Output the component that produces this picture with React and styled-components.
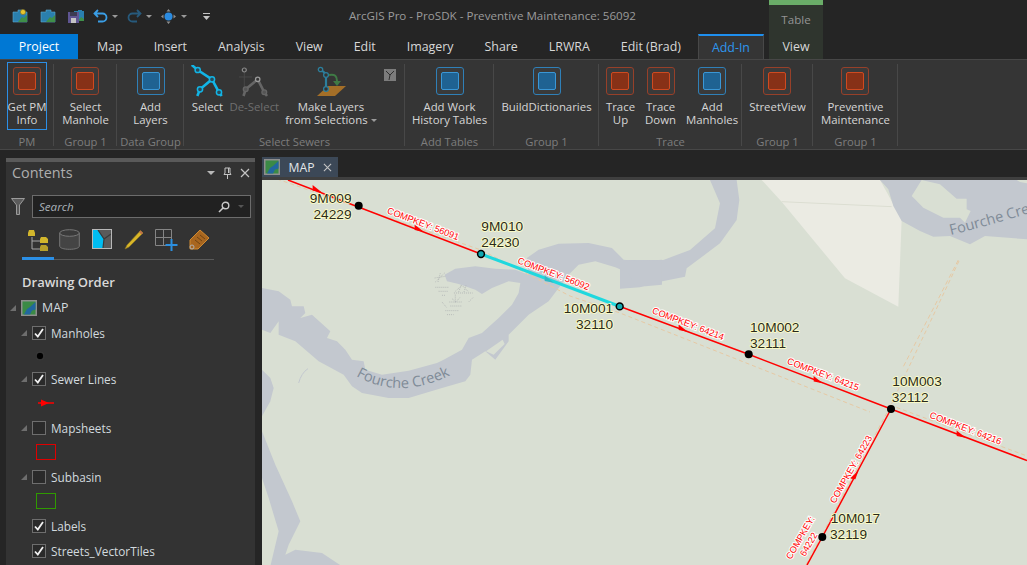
import React from 'react';
import styled, { createGlobalStyle } from 'styled-components';

const Global = createGlobalStyle`
  html, body { margin: 0; padding: 0; height: 100%; overflow: hidden; background: #252525; }
  #root { height: 100%; }
`;

const Page = styled.div`
  display: flex;
  flex-direction: column;
  height: 565px;
  background: #252525;
  font-family: "Open Sans", "Noto Sans", sans-serif;
  font-size: 12px;
  color: #d6d6d6;
`;

/* ---------- title bar + tabs ---------- */
const Header = styled.header`
  display: flex;
  height: 59px;
  flex: none;
`;
const HeaderMain = styled.div`
  width: 769px;
  display: flex;
  flex-direction: column;
`;
const TitleRow = styled.div`
  height: 34px;
  display: flex;
  align-items: center;
`;
const QuickAccess = styled.div`
  width: 349px;
  height: 14px;
  margin-top: -2px;
  padding-left: 12px;
  box-sizing: border-box;
  display: flex;
  align-items: center;
`;
const QuickSlot = styled.span`
  display: flex;
  align-items: center;
  margin-right: ${(p) => p.gap}px;
`;
const Caret = styled.span`
  display: inline-block;
  width: 0;
  height: 0;
  vertical-align: middle;
  border-left: ${(p) => p.size || 3}px solid transparent;
  border-right: ${(p) => p.size || 3}px solid transparent;
  border-top: ${(p) => p.size || 3}px solid ${(p) => p.color || '#9a9a9a'};
  margin-left: ${(p) => p.left || 0}px;
`;
const AppTitle = styled.div`
  color: #9b9b9b;
  font-size: 11.6px;
  margin-top: -3px;
  white-space: nowrap;
`;
const TabRow = styled.nav`
  height: 25px;
  display: flex;
`;
const Tab = styled.div`
  height: 25px;
  box-sizing: border-box;
  display: flex;
  align-items: center;
  white-space: nowrap;
  padding: 0 15.5px;
  font-size: 12.4px;
  color: #d8d8d8;
`;
const ProjectTab = styled(Tab)`
  width: 78px;
  justify-content: center;
  padding: 0;
  margin-right: 3.5px;
  background: #0078d4;
  color: #fff;
`;
const ActiveTab = styled(Tab)`
  width: 66px;
  justify-content: center;
  padding: 0;
  margin-left: 1.5px;
  background: #353535;
  border: 1px solid #484848;
  border-bottom: none;
  border-top: 2px solid #1e8fef;
  color: #2e95ee;
`;
const ContextColumn = styled.div`
  width: 54px;
  height: 59px;
  box-sizing: border-box;
  border-top: 5px solid #6aad68;
  background: #2f352e;
  display: flex;
  flex-direction: column;
  align-items: center;
`;
const ContextName = styled.div`
  height: 29px;
  display: flex;
  align-items: center;
  color: #949494;
  font-size: 11.6px;
`;
const ContextTab = styled.div`
  height: 25px;
  display: flex;
  align-items: center;
  color: #d8d8d8;
  font-size: 12.4px;
`;

/* ---------- ribbon ---------- */
const Ribbon = styled.section`
  height: 91px;
  flex: none;
  box-sizing: border-box;
  display: flex;
  background: #353535;
  border-top: 1px solid #474747;
  border-bottom: 1px solid #474747;
`;
const Group = styled.div`
  width: ${(p) => p.width}px;
  flex: none;
  box-sizing: border-box;
  display: flex;
  flex-direction: column;
  position: relative;
  padding-top: 2px;
  &::after {
    content: '';
    position: absolute;
    right: 0;
    top: 4px;
    bottom: 3px;
    width: 1px;
    background: #484848;
  }
`;
const GroupBody = styled.div`
  height: 68px;
  box-sizing: border-box;
  padding-left: ${(p) => p.inset || 0}px;
  padding-right: ${(p) => p.insetEnd || 0}px;
  display: flex;
  justify-content: center;
`;
const GroupName = styled.div`
  margin-top: 5px;
  text-align: center;
  color: #7d7d7d;
  font-size: 11.2px;
  line-height: 13px;
`;
const BigButton = styled.div`
  box-sizing: border-box;
  flex: none;
  height: 68px;
  padding: 2px ${(p) => (p.tight ? 0 : p.wide ? 4 : 2)}px 0;
  border: 1px solid ${(p) => (p.focused ? '#2c8fe6' : 'transparent')};
  display: flex;
  flex-direction: column;
  align-items: center;
  white-space: pre;
  text-align: center;
  line-height: 13px;
  font-size: 11.4px;
  color: ${(p) => (p.disabled ? '#6f6f6f' : '#d6d6d6')};
`;
const IconSlot = styled.div`
  height: 32px;
  margin-bottom: 3px;
  display: flex;
  align-items: center;
  justify-content: center;
`;
const AddinIcon = styled.div`
  width: 28px;
  height: 28px;
  box-sizing: border-box;
  border-radius: 3px;
  border: 1px solid ${(p) => (p.tone === 'blue' ? '#2f80b8' : '#974029')};
  background: #3a3a3a;
  display: flex;
  align-items: center;
  justify-content: center;
  &::before {
    content: '';
    width: 18px;
    height: 18px;
    box-sizing: border-box;
    border-radius: 2px;
    border: 1px solid ${(p) => (p.tone === 'blue' ? '#3a97d6' : '#cf4a20')};
    background: ${(p) => (p.tone === 'blue' ? '#1f6292' : '#873117')};
  }
`;
const SmallCommand = styled.div`
  align-self: flex-start;
  margin: 7px 0 0 4px;
  display: flex;
`;

/* ---------- workspace ---------- */
const Workspace = styled.main`
  flex: 1;
  min-height: 0;
  display: flex;
  padding: 7px 0 0 6px;
`;
const ContentsPane = styled.aside`
  width: 249px;
  margin-top: 1px;
  flex: none;
  box-sizing: border-box;
  background: #333;
  border-top: 4px solid #5a5a5a;
  overflow: hidden;
`;
const PaneHeader = styled.div`
  height: 25px;
  padding: 0 5px 4px 6px;
  box-sizing: border-box;
  display: flex;
  align-items: center;
  color: #aeaeae;
  font-size: 14.4px;
`;
const PaneTitle = styled.span`
  flex: 1;
`;
const PaneControls = styled.span`
  display: flex;
  align-items: center;
  gap: 8px;
`;
const SearchRow = styled.div`
  height: 23px;
  margin-top: 8px;
  padding: 0 4px 0 5px;
  display: flex;
  align-items: center;
  gap: 7px;
`;
const SearchBox = styled.div`
  flex: 1;
  height: 23px;
  box-sizing: border-box;
  padding: 0 6px;
  background: #212121;
  border: 1px solid #6c6c6c;
  display: flex;
  align-items: center;
  color: #a9b2b8;
  font-style: italic;
  font-size: 11.6px;
`;
const SearchText = styled.span`
  flex: 1;
`;
const ViewIcons = styled.div`
  margin: 11px 0 0 16px;
  width: 192px;
  height: 31px;
  box-sizing: border-box;
  padding-left: 5px;
  border-bottom: 1px solid #5a5a5a;
  position: relative;
  display: flex;
  gap: 10px;
  &::after {
    content: '';
    position: absolute;
    left: 0;
    bottom: -1px;
    width: 32px;
    height: 3px;
    background: #2b8fe6;
  }
`;
const ViewIcon = styled.span`
  display: block;
  width: ${(p) => p.width}px;
  height: 23px;
  margin-right: ${(p) => p.after}px;
`;
const SectionTitle = styled.div`
  margin: 12px 0 0 16px;
  height: 20px;
  line-height: 20px;
  color: #d9d9d9;
  font-size: 13px;
  font-weight: 600;
`;
const Tree = styled.div`
  margin-top: 3px;
`;
const LayerRow = styled.div`
  height: 25px;
  display: flex;
  align-items: center;
  padding-left: ${(p) => p.indent}px;
  color: #d2dadf;
  font-size: 11.8px;
  white-space: nowrap;
`;
const MapRow = styled(LayerRow)`
  font-size: 12.4px;
`;
const MapName = styled.span`
  margin-left: 5px;
`;
const SymbolRow = styled.div`
  height: ${(p) => (p.compact ? 21 : 24)}px;
  display: flex;
  align-items: center;
  padding-left: 30px;
`;
const Expander = styled.span`
  width: 0;
  height: 0;
  margin-right: 5px;
  border-left: 6px solid transparent;
  border-bottom: 6px solid #6e6e6e;
`;
const CheckBox = styled.span`
  width: 14px;
  height: 14px;
  box-sizing: border-box;
  margin-right: 5px;
  background: #2a2a2a;
  border: 1px solid #6e6e6e;
  display: flex;
  align-items: center;
  justify-content: center;
  flex: none;
`;
const FillSwatch = styled.span`
  width: 20px;
  height: 16px;
  box-sizing: border-box;
  border: 1px solid ${(p) => p.color};
`;

const MapPane = styled.div`
  flex: 1;
  min-width: 0;
  margin-left: 7px;
  display: flex;
  flex-direction: column;
`;
const DocTabs = styled.div`
  height: 20px;
  flex: none;
  display: flex;
`;
const DocTab = styled.div`
  width: 76px;
  box-sizing: border-box;
  padding: 0 6px 0 2px;
  background: #3c4857;
  color: #e2e6ea;
  font-size: 12.2px;
  display: flex;
  align-items: center;
  justify-content: space-between;
`;
const MapFrame = styled.div`
  flex: 1;
  min-height: 0;
  border-top: 3px solid #3f3f3f;
`;
const MapSvg = styled.svg`
  display: block;
  width: 100%;
  height: 100%;
  background: #d9dfd3;
`;
const NodeLabel = styled.text`
  font-family: "Liberation Sans", Arial, sans-serif;
  font-size: 13.7px;
  fill: #2a2a1c;
  stroke: #ffffc4;
  stroke-width: 1.6px;
  paint-order: stroke;
`;
const KeyLabel = styled.text`
  font-family: "Liberation Sans", Arial, sans-serif;
  font-size: 9.2px;
  fill: #f00;
  stroke: #fff;
  stroke-width: 2px;
  paint-order: stroke;
`;
const WaterLabel = styled.text`
  font-family: "Open Sans", sans-serif;
  font-size: 14.6px;
  fill: #7f8b97;
`;

/* ---------- icons ---------- */
const FolderIcon = ({ star }) => (
  <svg width="16" height="14" viewBox="0 0 16 14">
    <path d="M1 3h5V1h5v2h4v10H1z" fill="#2a7fae" stroke="#5aa8d0" strokeWidth=".6" />
    <path d="M6 13l4-5 2 1 3-3v7z" fill="#3f8f4a" />
    {star && <circle cx="11" cy="3" r="2.6" fill="#e8c52e" stroke="#7a6a20" strokeWidth=".6" />}
  </svg>
);
const SaveIcon = () => (
  <svg width="16" height="14" viewBox="0 0 16 14">
    <path d="M6 2h4V1h4v1h2v10H6z" fill="#2a7fae" />
    <path d="M10 12l3-4 3 2v2z" fill="#3f8f4a" />
    <rect x="0" y="3" width="11" height="11" fill="#5f5592" />
    <rect x="2" y="3" width="7" height="4" fill="#3b3b52" />
    <rect x="3" y="9" width="5" height="5" fill="#c4c4c4" />
  </svg>
);
const UndoIcon = ({ color, flip }) => (
  <svg width="15" height="14" viewBox="0 0 15 14" style={flip ? { transform: 'scaleX(-1)' } : undefined}>
    <path d="M5 1L1.5 4.5 5 8M2 4.5h7.5a4 4 0 0 1 0 8H5" fill="none" stroke={color} strokeWidth="1.8" />
  </svg>
);
const NavIcon = () => (
  <svg width="15" height="15" viewBox="0 0 15 15">
    <circle cx="7.5" cy="7.5" r="4" fill="#2b8be0" />
    <path d="M7.5 0l2 2.5h-4zM7.5 15l2-2.5h-4zM0 7.5l2.500-2v4zM15 7.5l-2.500-2v4z" fill="#8d8d8d" />
  </svg>
);
const CustomizeIcon = () => (
  <svg width="7" height="7" viewBox="0 0 7 7">
    <path d="M0 .5h7" stroke="#c4c4c4" strokeWidth="1" />
    <path d="M0 3h7L3.500 7z" fill="#c4c4c4" />
  </svg>
);
const SelectIcon = () => {
  const c = '#12b5e6';
  return (
    <svg width="32" height="32" viewBox="0 0 32 32">
      <path d="M.7 0L6.700 5 21 14.300 9 24.300 6.300 31M21 14.300L28 27.300 30.700 31" fill="none" stroke={c} strokeWidth="2.600" />
      {[[6.7, 5], [21, 14.3], [9, 24.3], [28, 27.3]].map(([x, y]) => (
        <circle key={x} cx={x} cy={y} r="2.600" fill="#2a4a58" stroke={c} strokeWidth="1.500" />
      ))}
    </svg>
  );
};
const DeselectIcon = () => (
  <svg width="32" height="32" viewBox="0 0 32 32">
    <path d="M6.300 7v20M1 12h13" stroke="#4c4c4c" strokeWidth=".8" />
    <path d="M19.700 14.300L7.700 24.300 5.500 31M19.700 14.300L26.300 27.300 29 31" fill="none" stroke="#666" strokeWidth="2.600" />
    <circle cx="6.300" cy="5" r="2" fill="#333" stroke="#8c8c8c" strokeWidth="1.200" />
    <circle cx="19.700" cy="14.300" r="2.200" fill="#333" stroke="#9a9a9a" strokeWidth="1.300" />
    <circle cx="7.700" cy="24.300" r="2.400" fill="#555" stroke="#666" strokeWidth="1.300" />
    <circle cx="26.300" cy="27.300" r="2.400" fill="#555" stroke="#666" strokeWidth="1.300" />
  </svg>
);
const MakeLayersIcon = () => (
  <svg width="34" height="32" viewBox="0 0 34 32">
    <path d="M3 31l11-10h18L21 31z" fill="#a46f28" />
    <path d="M6 4l6 5 0 15" fill="none" stroke="#2c7f9d" strokeWidth="2.200" />
    <circle cx="6.500" cy="4.500" r="2.200" fill="#333" stroke="#2c7f9d" strokeWidth="1.300" />
    <circle cx="12" cy="10" r="2.400" fill="#333" stroke="#2c7f9d" strokeWidth="1.300" />
    <circle cx="12" cy="24" r="2.400" fill="#333" stroke="#2c7f9d" strokeWidth="1.300" />
    <path d="M15 10c6-1 8 1 8 6" fill="none" stroke="#3f7a45" strokeWidth="2" />
    <path d="M19 16h8l-4 5z" fill="#3f7a45" />
  </svg>
);
const FilterGlyph = () => (
  <svg width="12" height="12" viewBox="0 0 12 12">
    <rect width="12" height="12" fill="#7c7c7c" />
    <path d="M2 2l4 4 4-4M6 6l-1 5" fill="none" stroke="#2f2f2f" strokeWidth="1" />
  </svg>
);
const PinIcon = () => (
  <svg width="9" height="12" viewBox="0 0 9 12">
    <path d="M2 1h5v5l1 1.500H1L2 6zM4.500 8v4M5.500 1v5" fill="none" stroke="#c4c4c4" />
  </svg>
);
const CloseIcon = ({ size = 10, color = '#c4c4c4' }) => (
  <svg width={size} height={size} viewBox="0 0 10 10">
    <path d="M1 1l8 8M9 1l-8 8" stroke={color} strokeWidth="1.200" />
  </svg>
);
const FunnelIcon = () => (
  <svg width="14" height="17" viewBox="0 0 14 17">
    <path d="M.5.500h13L8.500 7v9.500h-3V7z" fill="#5b5b5b" stroke="#9b9b9b" />
  </svg>
);
const MagnifierIcon = () => (
  <svg width="12" height="12" viewBox="0 0 12 12">
    <circle cx="7.500" cy="4.500" r="3.300" fill="none" stroke="#c8c8c8" strokeWidth="1.400" />
    <path d="M5 7l-4 4" stroke="#c8c8c8" strokeWidth="1.600" />
  </svg>
);
const OrderIcon = () => (
  <svg width="22" height="23" viewBox="0 0 22 23">
    <path d="M5 8v12h8M5 12h8" fill="none" stroke="#a8a8a8" />
    <path d="M1 4l1-3h5l1 3v3H1z" fill="#d2b62c" />
    <path d="M13 10l1-2h5l2 2v4h-8z" fill="#d2b62c" />
    <path d="M13 18l1-2h5l2 2v4h-8z" fill="#b7a02a" />
  </svg>
);
const CylinderIcon = () => (
  <svg width="21" height="21" viewBox="0 0 21 21">
    <path d="M.7 4v13c0 2 4 3.300 9.800 3.300s9.800-1.300 9.800-3.300V4" fill="#444" stroke="#777" />
    <ellipse cx="10.500" cy="4" rx="9.800" ry="3.300" fill="#3a3a3a" stroke="#777" />
  </svg>
);
const SourceIcon = () => (
  <svg width="20" height="20" viewBox="0 0 20 20">
    <rect width="20" height="20" fill="#5a5a5a" />
    <path d="M1 1h5l6 9-1 9H1z" fill="#00bdf2" />
    <path d="M6 1l6 9-1 9M12 10l7-5" fill="none" stroke="#3a3a3a" strokeWidth="1.200" />
    <rect x=".5" y=".5" width="19" height="19" fill="none" stroke="#b8b8b8" />
  </svg>
);
const PencilIcon = () => (
  <svg width="20" height="21" viewBox="0 0 20 21">
    <path d="M16.500 1.500L3 16l-2 4 4-2L19 4z" fill="#d8b628" stroke="#8a7420" strokeWidth=".6" />
    <path d="M16.500 1.500L19 4l-1.500 1.500L15 3z" fill="#c0724a" />
  </svg>
);
const GridPlusIcon = () => (
  <svg width="24" height="23" viewBox="0 0 24 23">
    <path d="M.5.500h16v16H.5zM8.500.500v16M.5 8.500h16" fill="none" stroke="#858585" />
    <path d="M16.500 10v12M10.500 16h12" stroke="#2b8fe0" strokeWidth="2" />
  </svg>
);
const TagIcon = () => (
  <svg width="22" height="22" viewBox="0 0 22 22">
    <path d="M12 1l9 8-11 11H2V11z" fill="#a8661f" stroke="#d08a30" />
    <path d="M9 8l5 4M7 11l5 4M12 6l5 4" stroke="#6f4414" />
    <circle cx="4" cy="18" r="2" fill="none" stroke="#b0b0b0" />
  </svg>
);
const MapGlyph = () => (
  <svg width="16" height="16" viewBox="0 0 16 16">
    <rect width="16" height="16" fill="#8f8f8f" />
    <rect x="1.500" y="1.500" width="13" height="13" fill="#3b8a46" />
    <path d="M14.500 2L9 7 6 9l-3 5.500h6l2-4 3.500-1z" fill="#22679f" />
  </svg>
);
const CheckMark = () => (
  <svg width="10" height="10" viewBox="0 0 10 10">
    <path d="M1 5.500l2.800 3L9 1" fill="none" stroke="#f2f2f2" strokeWidth="1.800" />
  </svg>
);

const ribbonGroups = [
  { name: 'PM', width: 54, items: [{ label: 'Get PM\nInfo', tone: 'red', focused: true, tight: true }] },
  { name: 'Group 1', width: 63, items: [{ label: 'Select\nManhole', tone: 'red' }] },
  { name: 'Data Group', width: 67, items: [{ label: 'Add\nLayers', tone: 'blue' }] },
  { name: 'Add Tables', width: 89, items: [{ label: 'Add Work\nHistory Tables', tone: 'blue' }] },
  { name: 'Group 1', width: 105, items: [{ label: 'BuildDictionaries', tone: 'blue' }] },
  {
    name: 'Trace',
    width: 143,
    inset: 3,
    items: [
      { label: 'Trace\nUp', tone: 'red', wide: true },
      { label: 'Trace\nDown', tone: 'red', wide: true },
      { label: 'Add\nManholes', tone: 'blue', wide: true },
    ],
  },
  { name: 'Group 1', width: 71, items: [{ label: 'StreetView', tone: 'red' }] },
  { name: 'Group 1', width: 85, items: [{ label: 'Preventive\nMaintenance', tone: 'red' }] },
];

const RibbonGroup = ({ group }) => (
  <Group width={group.width}>
    <GroupBody inset={group.inset}>
      {group.items.map((item) => (
        <BigButton key={item.label} focused={item.focused} tight={item.tight} wide={item.wide}>
          <IconSlot>
            <AddinIcon tone={item.tone} />
          </IconSlot>
          {item.label}
        </BigButton>
      ))}
    </GroupBody>
    <GroupName>{group.name}</GroupName>
  </Group>
);

const Arrow = ({ x, y, angle, color = '#f00' }) => (
  <polygon points="-6,-3.500 5,0 -4,1.500" fill={color} transform={`translate(${x} ${y}) rotate(${angle})`} />
);
const Node = ({ x, y, selected }) => (
  <circle cx={x} cy={y} r={selected ? 3.4 : 4} fill={selected ? '#12a8b0' : '#000'} stroke="#000" strokeWidth={selected ? 1.5 : 0} />
);
const Key = ({ x, y, angle, children }) => (
  <KeyLabel transform={`translate(${x} ${y}) rotate(${angle})`}>{children}</KeyLabel>
);

const nodeLabels = [
  ['9M009', 309.7, 203], ['24229', 313.5, 219],
  ['9M010', 481.3, 230.7], ['24230', 481.3, 246.7],
  ['10M001', 563.7, 313], ['32110', 576, 329],
  ['10M002', 750, 331.7], ['32111', 750, 347.7],
  ['10M003', 892.3, 385.7], ['32112', 891.7, 401.7],
  ['10M017', 830.7, 523.3], ['32119', 830, 539.3],
];

const MapDrawing = () => (
  <MapSvg viewBox="262 180 765 385" preserveAspectRatio="none">
    <defs>
      <path id="creek-west" d="M356 376Q402 402 456 372" />
      <path id="creek-east" d="M951 235Q985 227 1090 195" />
    </defs>

    {/* land use patch and water, traced in zoomed coordinates */}
    <g transform="translate(640 170) scale(.3333)">
      <path d="M365 30H720L745 75 785 150 775 410 615 325 425 95z" fill="#ebebe3" />
      <path d="M425 95L755 110" stroke="#dcded2" strokeWidth="3" />
      <path fill="#c3c8cf" d="M210 30H290L298 90 290 150 240 220 140 295 135 320 60 335 0 352 -60 356V270L70 270 150 240 225 175 240 100z" />
      <path d="M955 270L790 590" stroke="#e6c9a4" strokeWidth="3" strokeDasharray="14 9" />
    </g>
    <g transform="translate(860 176) scale(.3333)">
      <path fill="#c3c8cf" d="M60 12L85 40 100 90 125 135 180 165 220 182 270 180 330 205 375 180 501 190V12z" />
      <path fill="#d9dfd3" d="M185 12L240 25 290 68 320 68 320 100 332 105 315 140 300 125 250 125 190 95 165 70 155 60z" />
      <path fill="#d9dfd3" d="M470 12H501V22L480 18z" />
    </g>
    <g transform="translate(262 178) scale(.3333)">
      <path fill="#c3c8cf" d="M0 330L50 340 85 365 90 385 125 385 130 405 115 420 150 410 205 460 195 480 225 490 250 515 270 545 305 550 310 575 360 590 440 578 525 555 545 545 600 515 620 480 660 465 710 420 750 380 770 345 775 315 740 310 690 330 660 348 640 335 590 318 555 310 548 290 580 272 640 265 700 272 760 275 800 290 795 240 830 215 890 197 980 195 1050 210 1085 245 1130 250 1200 245V320L1150 325 1120 325 1100 285 1060 268 1000 250 950 260 920 290 890 330 860 370 800 410 740 470 740 490 700 545 670 520 630 545 625 590 610 610 540 630 440 660 380 660 300 645 270 625 245 590 170 550 100 490 50 470 50 430 25 465 0 455z" />
      <path fill="#d9dfd3" d="M672 520L722 485 728 498 695 530z" />
      <path fill="#c3c8cf" d="M0 575L25 600 35 630 25 670 0 715z" />
      <path fill="#c3c8cf" d="M0 760L40 860 90 970 115 1030 80 1100 70 1130 100 1115 180 1125 240 1165H25L50 1060 20 960 0 900z" />
      <path d="M110 615Q118 585 138 572" fill="none" stroke="#c3c8cf" strokeWidth="3" />
      {/* quarry marks */}
      <g stroke="#b1b5b5" strokeWidth="2.500" strokeDasharray="3 3" fill="none">
        <path d="M520 312L548 285M528 312L535 285M518 300L550 295M520 328H560M530 340H560M540 352H552" />
        <path d="M580 340L600 322 620 342M590 342L598 320M606 342L612 322M576 345H632" />
        <path d="M562 372H600M565 384H598M580 350V375M570 362L582 372 594 358M550 398H590M555 410H575M540 372L555 390M620 372L634 358" />
      </g>
    </g>
    <WaterLabel>
      <textPath href="#creek-west">Fourche Creek</textPath>
    </WaterLabel>
    <WaterLabel>
      <textPath href="#creek-east">Fourche Creek</textPath>
    </WaterLabel>

    {/* road centre lines under the sewers */}
    <path
      d="M277 179L481 250 570 296 620 313 870 412 M890 405L1027 456 M959 261L891 405 806 565"
      fill="none"
      stroke="#e6c9a4"
      strokeWidth="1"
      strokeDasharray="4 3"
    />

    <path d="M288 180L481 254M620 306.500L748.500 354.300 891 409 1027 460.500M891 409L822.300 537 807 565" fill="none" stroke="#f00" strokeWidth="1.500" />
    <path d="M481 254L620 306.500" stroke="#1fd8de" strokeWidth="3" />

    <Arrow x={317} y={190.500} angle={20.500} />
    <Arrow x={419} y={230} angle={20.500} />
    <Arrow x={549} y={281} angle={20.500} color="#30b8c4" />
    <Arrow x={683} y={330} angle={20.500} />
    <Arrow x={818} y={381.500} angle={20.500} />
    <Arrow x={961} y={436} angle={20.500} />
    <Arrow x={856} y={475} angle={-61} />

    <Key x={386.500} y={213} angle={21}>COMPKEY: 56091</Key>
    <Key x={517} y={263} angle={21}>COMPKEY: 56092</Key>
    <Key x={651.500} y={313} angle={21}>COMPKEY: 64214</Key>
    <Key x={786.500} y={363.500} angle={21}>COMPKEY: 64215</Key>
    <Key x={929} y={417.500} angle={21}>COMPKEY: 64216</Key>
    <Key x={835} y={504} angle={-60.500}>COMPKEY: 64223</Key>
    <Key x={791} y={560} angle={-60}>COMPKEY:</Key>
    <Key x={805} y={557} angle={-60}>64222</Key>

    <Node x={358.700} y={205.700} />
    <Node x={481} y={254} selected />
    <Node x={619.700} y={306.400} selected />
    <Node x={748.700} y={354.300} />
    <Node x={891} y={409} />
    <Node x={822.300} y={537} />

    {nodeLabels.map(([text, x, y]) => (
      <NodeLabel key={text} x={x} y={y}>{text}</NodeLabel>
    ))}
  </MapSvg>
);

const Layer = ({ name, checked, expandable }) => (
  <LayerRow indent={expandable ? 15 : 26}>
    {expandable && <Expander />}
    <CheckBox>{checked && <CheckMark />}</CheckBox>
    {name}
  </LayerRow>
);

export default function App() {
  return (
    <Page>
      <Global />
      <Header>
        <HeaderMain>
          <TitleRow>
            <QuickAccess>
              <QuickSlot gap={12}><FolderIcon star /></QuickSlot>
              <QuickSlot gap={12}><FolderIcon /></QuickSlot>
              <QuickSlot gap={9}><SaveIcon /></QuickSlot>
              <QuickSlot gap={9}><UndoIcon color="#3a9ee6" /><Caret left={4} /></QuickSlot>
              <QuickSlot gap={9}><UndoIcon color="#275a7c" flip /><Caret left={4} /></QuickSlot>
              <QuickSlot gap={16}><NavIcon /><Caret left={5} /></QuickSlot>
              <CustomizeIcon />
            </QuickAccess>
            <AppTitle>ArcGIS Pro - ProSDK - Preventive Maintenance: 56092</AppTitle>
          </TitleRow>
          <TabRow>
            <ProjectTab>Project</ProjectTab>
            {['Map', 'Insert', 'Analysis', 'View', 'Edit', 'Imagery', 'Share', 'LRWRA', 'Edit (Brad)'].map((t) => (
              <Tab key={t}>{t}</Tab>
            ))}
            <ActiveTab>Add-In</ActiveTab>
          </TabRow>
        </HeaderMain>
        <ContextColumn>
          <ContextName>Table</ContextName>
          <ContextTab>View</ContextTab>
        </ContextColumn>
      </Header>

      <Ribbon>
        {ribbonGroups.slice(0, 3).map((g, i) => (
          <RibbonGroup key={i} group={g} />
        ))}
        <Group width={221}>
          <GroupBody insetEnd={5}>
            <BigButton>
              <IconSlot><SelectIcon /></IconSlot>
              Select
            </BigButton>
            <BigButton disabled>
              <IconSlot><DeselectIcon /></IconSlot>
              De-Select
            </BigButton>
            <BigButton>
              <IconSlot><MakeLayersIcon /></IconSlot>
              <span>Make Layers</span>
              <span>from Selections<Caret left={3} /></span>
            </BigButton>
            <SmallCommand><FilterGlyph /></SmallCommand>
          </GroupBody>
          <GroupName>Select Sewers</GroupName>
        </Group>
        {ribbonGroups.slice(3).map((g, i) => (
          <RibbonGroup key={i} group={g} />
        ))}
      </Ribbon>

      <Workspace>
        <ContentsPane>
          <PaneHeader>
            <PaneTitle>Contents</PaneTitle>
            <PaneControls>
              <Caret size={4} color="#b8b8b8" />
              <PinIcon />
              <CloseIcon />
            </PaneControls>
          </PaneHeader>
          <SearchRow>
            <FunnelIcon />
            <SearchBox>
              <SearchText>Search</SearchText>
              <MagnifierIcon />
              <Caret left={8} color="#555" />
            </SearchBox>
          </SearchRow>
          <ViewIcons>
            <ViewIcon width={22} after={0}><OrderIcon /></ViewIcon>
            <ViewIcon width={21} after={2}><CylinderIcon /></ViewIcon>
            <ViewIcon width={20} after={2}><SourceIcon /></ViewIcon>
            <ViewIcon width={20} after={1}><PencilIcon /></ViewIcon>
            <ViewIcon width={23} after={0}><GridPlusIcon /></ViewIcon>
            <ViewIcon width={22} after={0}><TagIcon /></ViewIcon>
          </ViewIcons>
          <SectionTitle>Drawing Order</SectionTitle>
          <Tree>
            <MapRow indent={4}>
              <Expander />
              <MapGlyph />
              <MapName>MAP</MapName>
            </MapRow>
            <Layer name="Manholes" checked expandable />
            <SymbolRow compact>
              <svg width="20" height="10" viewBox="0 0 20 10"><circle cx="4" cy="5" r="3.800" fill="#000" stroke="#555" strokeWidth=".6" /></svg>
            </SymbolRow>
            <Layer name="Sewer Lines" checked expandable />
            <SymbolRow>
              <svg width="20" height="10" viewBox="0 0 20 10"><path d="M2 5h16" stroke="#f00" strokeWidth="1.500" /><path d="M5 1.500L13 5 5 8.500z" fill="#f00" /></svg>
            </SymbolRow>
            <Layer name="Mapsheets" expandable />
            <SymbolRow><FillSwatch color="#e00000" /></SymbolRow>
            <Layer name="Subbasin" expandable />
            <SymbolRow><FillSwatch color="#2f9a00" /></SymbolRow>
            <Layer name="Labels" checked />
            <Layer name="Streets_VectorTiles" checked />
          </Tree>
        </ContentsPane>
        <MapPane>
          <DocTabs>
            <DocTab>
              <MapGlyph />
              <span>MAP</span>
              <CloseIcon size={9} />
            </DocTab>
          </DocTabs>
          <MapFrame>
            <MapDrawing />
          </MapFrame>
        </MapPane>
      </Workspace>
    </Page>
  );
}
